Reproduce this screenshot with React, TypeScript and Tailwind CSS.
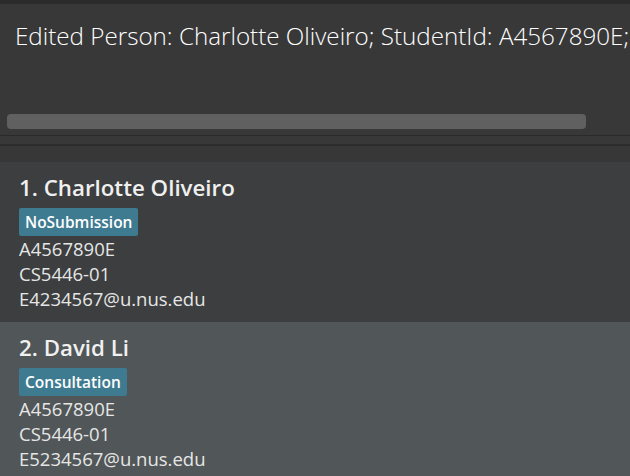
import React from 'react';

type Person = {
  index: number;
  name: string;
  tag: string;
  studentId: string;
  course: string;
  email: string;
};

const people: Person[] = [
  { index: 1, name: 'Charlotte Oliveiro', tag: 'NoSubmission', studentId: 'A4567890E', course: 'CS5446-01', email: 'E4234567@u.nus.edu' },
  { index: 2, name: 'David Li', tag: 'Consultation', studentId: 'A4567890E', course: 'CS5446-01', email: 'E5234567@u.nus.edu' },
];

const PersonCard: React.FC<{ person: Person; odd: boolean }> = ({ person, odd }) => {
  return (
    <div className={`h-[160px] shrink-0 pl-[19px] pt-[11px] ${odd ? 'bg-[#3c3e3f]' : 'bg-[#515658]'}`}>
      <div className="h-[30px] text-[22.3px] font-semibold leading-[30px] text-[#f0f0f0]">
        {person.index}. {person.name}
      </div>
      <div className="mt-[5px] flex">
        <span className="rounded-[2px] bg-[#3e7b91] px-[6px] text-[15.5px] font-semibold leading-[28px] text-white">
          {person.tag}
        </span>
      </div>
      <div className="text-[18.5px] leading-[25px] text-[#e6e6e6]">
        <div>{person.studentId}</div>
        <div>{person.course}</div>
        <div>{person.email}</div>
      </div>
    </div>
  );
};

export default function App() {
  return (
    <div className="flex h-[476px] w-[630px] flex-col overflow-hidden bg-[#383838] font-['Open_Sans','Noto_Sans',sans-serif]">
      <div className="h-[4px] shrink-0 bg-[#2b2b2b]" />
      <div className="relative h-[131px] shrink-0 overflow-hidden">
        <div className="whitespace-nowrap pl-[15px] pt-[14px] text-[24.2px] font-light leading-[36px] text-white">
          Edited Person: Charlotte Oliveiro; StudentId: A4567890E;
        </div>
        <div className="absolute left-[7px] top-[110px] h-[15px] w-[579px] rounded-[4px] bg-[#606060]" />
      </div>
      <div className="h-[1px] shrink-0 bg-[#2a2a2a]" />
      <div className="h-[8px] shrink-0 bg-[#383838]" />
      <div className="h-[2px] shrink-0 bg-[#2c2c2c]" />
      <div className="h-[16px] shrink-0 bg-[#373737]" />
      {people.map((p, i) => (
        <PersonCard key={p.index} person={p} odd={i % 2 === 0} />
      ))}
    </div>
  );
}
